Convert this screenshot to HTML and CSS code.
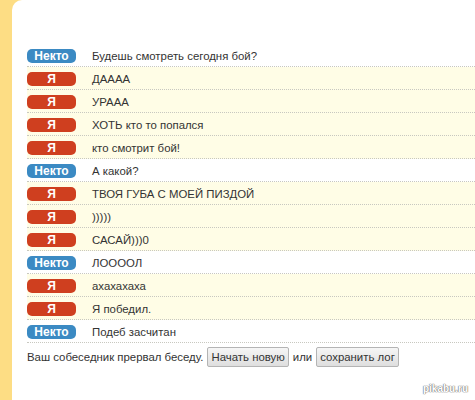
FILE: index.html
```html
<!DOCTYPE html>
<html lang="ru">
<head>
  <meta charset="UTF-8">
  <title>Чат</title>
  <link rel="stylesheet" href="styles.css">
</head>
<body>
  <div class="panel">
    <div class="log">
      <div class="msg"><span class="who stranger">Некто</span><span class="text">Будешь смотреть сегодня бой?</span></div>
      <div class="msg me"><span class="who">Я</span><span class="text">ДАААА</span></div>
      <div class="msg me"><span class="who">Я</span><span class="text">УРААА</span></div>
      <div class="msg me"><span class="who">Я</span><span class="text">ХОТЬ кто то попался</span></div>
      <div class="msg me"><span class="who">Я</span><span class="text">кто смотрит бой!</span></div>
      <div class="msg"><span class="who stranger">Некто</span><span class="text">А какой?</span></div>
      <div class="msg me"><span class="who">Я</span><span class="text">ТВОЯ ГУБА С МОЕЙ ПИЗДОЙ</span></div>
      <div class="msg me"><span class="who">Я</span><span class="text">)))))</span></div>
      <div class="msg me"><span class="who">Я</span><span class="text">САСАЙ)))0</span></div>
      <div class="msg"><span class="who stranger">Некто</span><span class="text">ЛООООЛ</span></div>
      <div class="msg me"><span class="who">Я</span><span class="text">ахахахаха</span></div>
      <div class="msg me"><span class="who">Я</span><span class="text">Я победил.</span></div>
      <div class="msg"><span class="who stranger">Некто</span><span class="text">Подеб засчитан</span></div>
    </div>
    <div class="status">
      Ваш собеседник прервал беседу.
      <button>Начать новую</button>
      или
      <button>сохранить лог</button>
    </div>
  </div>
  <div class="mark">pikabu.ru</div>
</body>
</html>
```

FILE: styles.css
```css
body {
  margin: 0;
  height: 400px;
  background: #fddd84;
  font-family: "Liberation Sans", Arial, sans-serif;
  font-size: 11.4px;
  color: #333;
  position: relative;
  overflow: hidden;
}
.panel {
  margin-left: 12px;
  height: 400px;
  background: #fff;
  border-top-left-radius: 10px;
  padding: 44px 0 0 15px;
  box-sizing: border-box;
}
.msg {
  display: flex;
  align-items: flex-start;
  height: 22px;
  border-bottom: 1px dotted #c8c8c0;
}
.msg.me {
  background: #fffde6;
}
.who {
  width: 49px;
  height: 14px;
  margin-top: 5px;
  border-radius: 5px;
  background: #cf3f1f;
  color: #fff;
  font-weight: bold;
  font-size: 12px;
  line-height: 14px;
  text-align: center;
}
.who.stranger {
  background: #3b8ac3;
}
.text {
  margin-left: 16px;
  margin-top: 5px;
  line-height: 14px;
}
.status {
  margin-top: 4px;
  display: flex;
  align-items: center;
  gap: 4px;
  white-space: nowrap;
}
.status button {
  font-family: inherit;
  font-size: 11.4px;
  color: #333;
  height: 20px;
  padding: 0 3px;
  border: 1px solid #b4b4b4;
  border-radius: 2px;
  background: linear-gradient(#f6f6f6, #dedede);
}
.mark {
  position: absolute;
  right: 7px;
  bottom: 6px;
  font-size: 10px;
  font-weight: bold;
  color: #fff;
  text-shadow: 0 0 1px #777, 0 0 1px #777, 0 0 1px #777;
}
```
